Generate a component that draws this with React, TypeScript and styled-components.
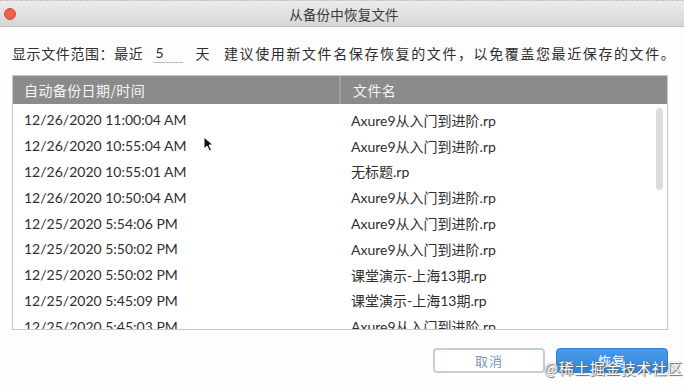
import React from 'react';
import styled, { createGlobalStyle } from 'styled-components';

const GlobalStyle = createGlobalStyle`
  html, body {
    margin: 0;
    padding: 0;
    background: #fdfdfd;
  }
  body {
    font-family: Lato, "Noto Sans CJK SC", sans-serif;
    color: #333;
  }
`;

const backups = [
  { time: '12/26/2020 11:00:04 AM', file: 'Axure9从入门到进阶.rp' },
  { time: '12/26/2020 10:55:04 AM', file: 'Axure9从入门到进阶.rp' },
  { time: '12/26/2020 10:55:01 AM', file: '无标题.rp' },
  { time: '12/26/2020 10:50:04 AM', file: 'Axure9从入门到进阶.rp' },
  { time: '12/25/2020 5:54:06 PM', file: 'Axure9从入门到进阶.rp' },
  { time: '12/25/2020 5:50:02 PM', file: 'Axure9从入门到进阶.rp' },
  { time: '12/25/2020 5:50:02 PM', file: '课堂演示-上海13期.rp' },
  { time: '12/25/2020 5:45:09 PM', file: '课堂演示-上海13期.rp' },
  { time: '12/25/2020 5:45:03 PM', file: 'Axure9从入门到进阶.rp' },
];

const App = () => {
  return (
    <Window>
      <GlobalStyle />
      <TitleBar>
        <CloseDot />
        <Title>从备份中恢复文件</Title>
        <span />
      </TitleBar>

      <Content>
        <RangeRow>
          <span>显示文件范围：最近</span>
          <DaysInput>5</DaysInput>
          <span>天</span>
          <Hint>建议使用新文件名保存恢复的文件，以免覆盖您最近保存的文件。</Hint>
        </RangeRow>

        <Table>
          <HeaderRow>
            <HeaderCell>自动备份日期/时间</HeaderCell>
            <HeaderCell $divider>文件名</HeaderCell>
          </HeaderRow>
          <Rows>
            {backups.map((b, i) => (
              <Row key={i}>
                <Cell>{b.time}</Cell>
                <Cell $second>{b.file}</Cell>
              </Row>
            ))}
            <ScrollThumb />
          </Rows>
        </Table>

        <Footer>
          <CancelButton>取消</CancelButton>
          <RestoreButton>恢复</RestoreButton>
        </Footer>
      </Content>

      <Cursor width="11" height="16" viewBox="0 0 11 16">
        <path d="M1 1 L1 13 L4 10 L6.5 15 L8.5 14 L6 9 L10 9 Z" fill="#111" stroke="#fff" strokeWidth="1" />
      </Cursor>
      <Watermark>@稀土掘金技术社区</Watermark>
    </Window>
  );
};

export default App;

const Window = styled.div`
  position: relative;
  width: 684px;
  height: 390px;
  overflow: hidden;
  display: flex;
  flex-direction: column;
  background: #fdfdfd;
`;

const TitleBar = styled.div`
  height: 25px;
  display: grid;
  grid-template-columns: 1fr auto 1fr;
  align-items: center;
  background: linear-gradient(#ececec, #d6d6d6);
  border-top: 1px dashed #c4c4c4;
  border-bottom: 1px solid #c2c2c2;
  padding-left: 4px;
`;

const CloseDot = styled.span`
  width: 12px;
  height: 12px;
  border-radius: 50%;
  background: #ec5f52;
  border: 1px solid #d9473b;
  box-sizing: border-box;
`;

const Title = styled.div`
  font-family: "Noto Sans CJK SC", sans-serif;
  font-size: 13.5px;
  color: #3a3a3a;
  letter-spacing: 0.2px;
`;

const Content = styled.div`
  padding: 0 16px 0 12px;
  display: flex;
  flex-direction: column;
`;

const RangeRow = styled.div`
  display: flex;
  align-items: center;
  height: 20px;
  margin-top: 16px;
  font-family: "Noto Sans CJK SC", sans-serif;
  font-size: 14px;
  color: #2e2e2e;
  letter-spacing: 0.6px;
  white-space: nowrap;

  & > span {
    flex-shrink: 0;
  }
`;

const DaysInput = styled.span`
  width: 28px;
  margin: 0 12px 0 10px;
  padding-left: 2px;
  border-bottom: 1px solid #bdbdbd;
  line-height: 18px;
  font-family: Lato, sans-serif;
`;

const Hint = styled.span`
  margin-left: 14px;
  letter-spacing: 1.6px;
`;

const Table = styled.div`
  margin-top: 12px;
  height: 253px;
  border: 1px solid #c6c6c6;
  display: flex;
  flex-direction: column;
  background: #fff;
`;

const HeaderRow = styled.div`
  height: 28px;
  flex-shrink: 0;
  display: grid;
  grid-template-columns: 326px 1fr;
  background: #8b8b8b;
`;

const HeaderCell = styled.div<{ $divider?: boolean }>`
  display: flex;
  align-items: center;
  padding-left: ${(p) => (p.$divider ? '12px' : '11px')};
  border-left: ${(p) => (p.$divider ? '2px solid #a2a2a2' : 'none')};
  font-family: "Noto Sans CJK SC", sans-serif;
  font-size: 14px;
  color: #f4f4f4;
  letter-spacing: 0.4px;
`;

const Rows = styled.div`
  position: relative;
  flex: 1;
  overflow: hidden;
  padding-top: 3px;
`;

const Row = styled.div`
  height: 25.8px;
  display: grid;
  grid-template-columns: 328px 1fr;
  align-items: center;
`;

const Cell = styled.div<{ $second?: boolean }>`
  padding-left: ${(p) => (p.$second ? '10px' : '11px')};
  font-family: Lato, "Noto Sans CJK SC", sans-serif;
  font-size: 14px;
  color: #2f2f2f;
  white-space: nowrap;
`;

const ScrollThumb = styled.div`
  position: absolute;
  top: 4px;
  right: 4px;
  width: 7px;
  height: 82px;
  border-radius: 4px;
  background: #dcdcdc;
`;

const Footer = styled.div`
  display: flex;
  justify-content: flex-end;
  gap: 11px;
  margin-top: 18px;
`;

const ButtonBase = styled.button`
  width: 112px;
  height: 25px;
  border-radius: 4px;
  font-family: "Noto Sans CJK SC", sans-serif;
  font-size: 13px;
  letter-spacing: 1px;
  cursor: pointer;
`;

const CancelButton = styled(ButtonBase)`
  background: #fff;
  border: 2px solid #c3cfdc;
  color: #7b96b8;
`;

const RestoreButton = styled(ButtonBase)`
  background: linear-gradient(#4a9ae8, #2f84dc);
  border: 1px solid #2f7fd2;
  color: #fff;
`;

const Cursor = styled.svg`
  position: absolute;
  left: 203px;
  top: 136px;
`;

const Watermark = styled.div`
  position: absolute;
  left: 544px;
  top: 357px;
  font-family: "Noto Sans CJK SC", sans-serif;
  font-size: 15px;
  color: #fff;
  letter-spacing: 0.5px;
  text-shadow: 0 0 1px #555, 1px 1px 1px #666;
`;
